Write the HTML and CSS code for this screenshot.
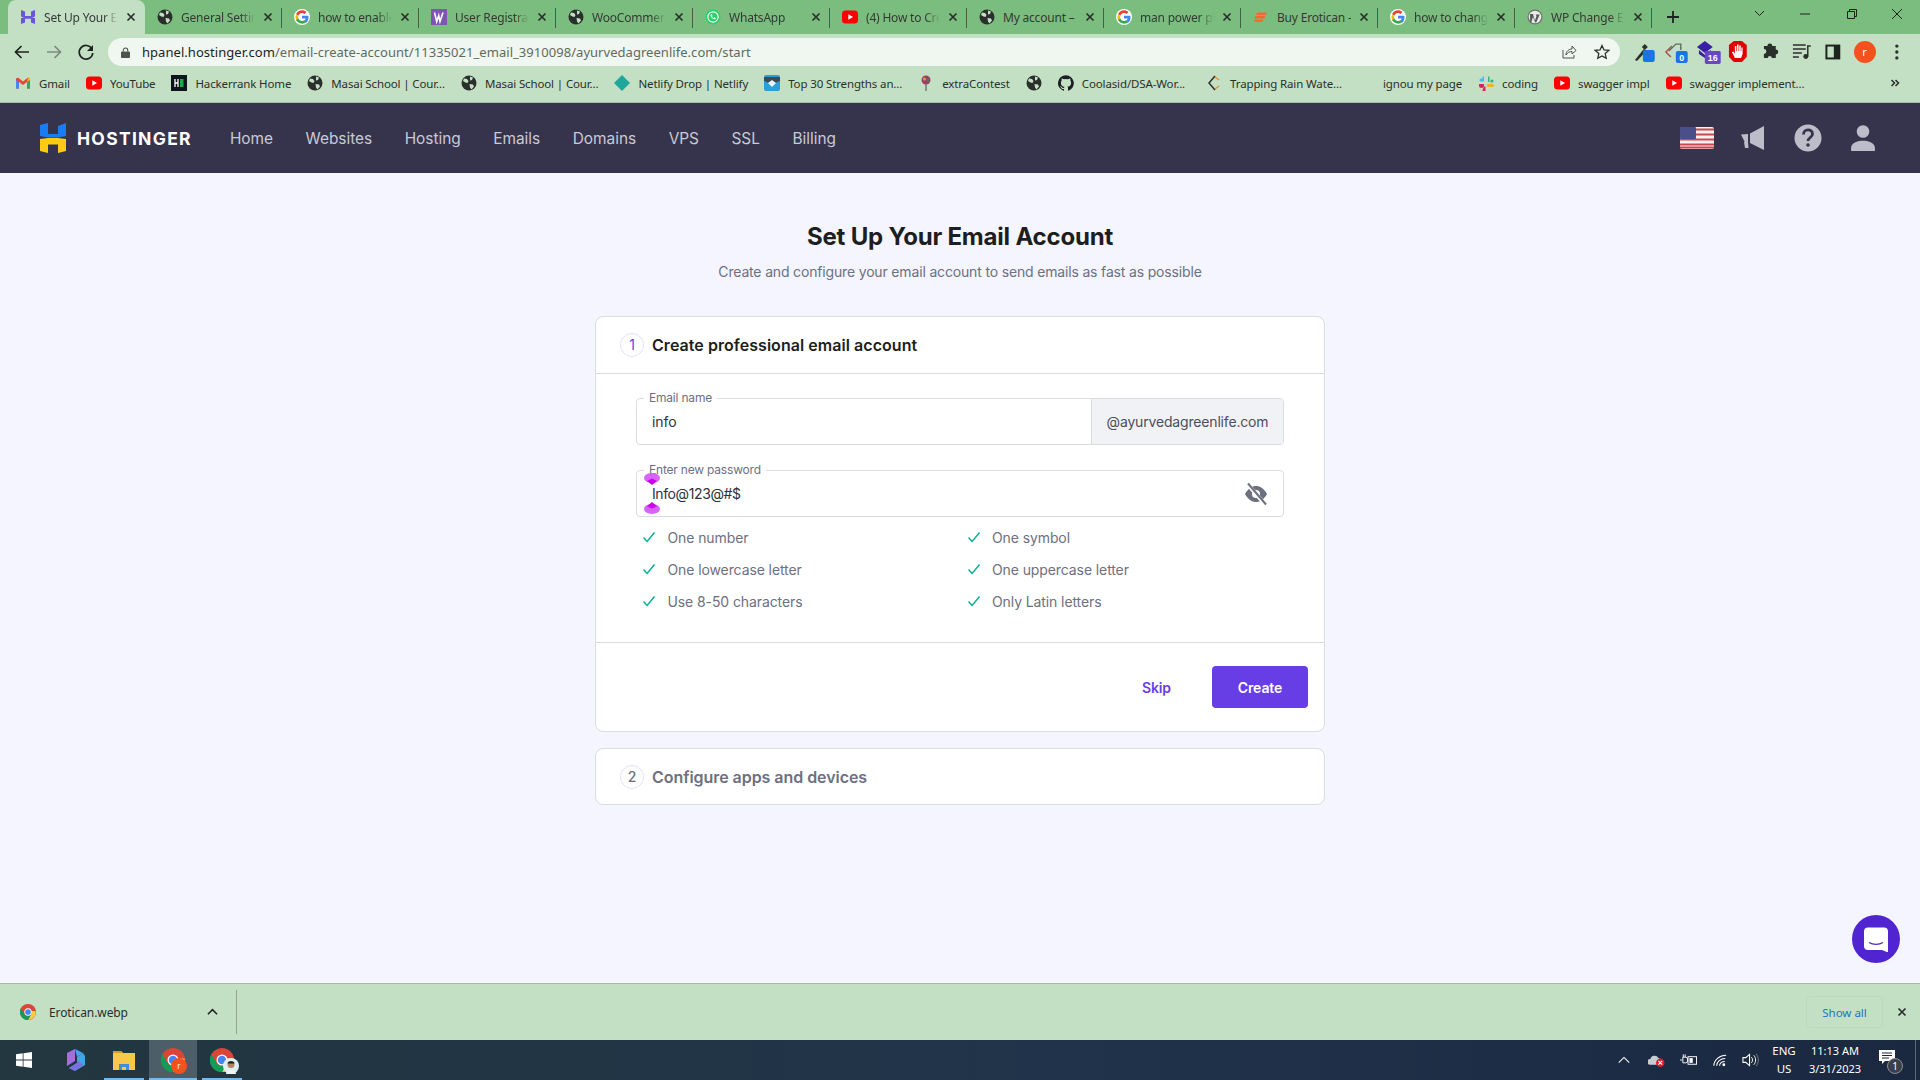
FILE: index.html
```html
<!DOCTYPE html>
<html lang="en">
<head>
<meta charset="utf-8">
<title>Set Up Your Email Account</title>
<link rel="stylesheet" href="styles.css">
</head>
<body>
<svg class="defs" width="0" height="0" aria-hidden="true">
  <symbol id="globe" viewBox="0 0 16 16"><circle cx="8" cy="8" r="7.5" fill="#2a2f2b"/><path d="M3 3.5l3 .5 1.5 2-1 2-2-.5L2 6zM9 1.500l3 1-1 2.500-2 .5zM8.500 9l3.500.5 1 2-2.500 3-1.500-2z" fill="#c4e0c4"/></symbol>
  <symbol id="g" viewBox="0 0 48 48"><circle cx="24" cy="24" r="24" fill="#fff"/><path fill="#EA4335" d="M24 12c3 0 5.600 1 7.700 3l5.700-5.700C33.900 6 29.400 4 24 4 16.200 4 9.500 8.500 6.200 15l6.700 5.200C14.500 15.400 18.900 12 24 12z"/><path fill="#4285F4" d="M43.500 24.500c0-1.600-.1-3.100-.4-4.500H24v8.500h11c-.5 2.700-2 5-4.300 6.600l6.600 5.100c3.900-3.600 6.200-9 6.200-15.700z"/><path fill="#FBBC05" d="M12.900 28.800a12 12 0 0 1 0-7.600L6.200 16a20 20 0 0 0 0 18z"/><path fill="#34A853" d="M24 44c5.400 0 9.900-1.800 13.300-4.800l-6.600-5.100c-1.800 1.200-4.100 2-6.700 2-5.100 0-9.500-3.400-11.100-8.100L6.200 33.200C9.500 39.500 16.200 44 24 44z"/></symbol>
  <symbol id="yt" viewBox="0 0 16 16"><rect y="1.500" width="16" height="13" rx="3.500" fill="#f00"/><path d="M6.300 5.300v5.400L11 8z" fill="#fff"/></symbol>
  <symbol id="chromelogo" viewBox="0 0 48 48"><circle cx="24" cy="24" r="24" fill="#DB4437"/><path d="M24 48l11-20-4-7h16a24 24 0 0 1-23 27z" fill="#FFCD40"/><path d="M24 48A24 24 0 0 1 3 12l12 21 9 0 11-5-11 20z" fill="#0F9D58"/><path d="M3 12h21v0l-9 21z" fill="#DB4437"/><circle cx="24" cy="24" r="11" fill="#fff"/><circle cx="24" cy="24" r="8.500" fill="#4285F4"/></symbol>
  <symbol id="check" viewBox="0 0 14 14"><path d="M1.500 7.500l3.600 4L12.500 2.500" fill="none" stroke="#00b090" stroke-width="1.400"/></symbol>
  <symbol id="x" viewBox="0 0 10 10"><path d="M1.500 1.500l7 7M8.500 1.500l-7 7" stroke="#2a2f2b" stroke-width="1.700" fill="none"/></symbol>
</svg>

<div class="tabstrip">
  <div class="tab tab-active">
    <svg class="fav" viewBox="0 0 16 16"><path d="M1 1l4 1.500v4.500h6V2.500L15 1v6.500l-3 1H4l-3-1zM1 15l4-1.500V9.800h6v3.700l4 1.500V9l-3-.5H4L1 9z" fill="#6c55d8"/></svg>
    <span class="tab-title">Set Up Your Email Account</span>
    <svg class="tab-x"><use href="#x"/></svg>
  </div>
  <div class="tab tab-sep"><svg class="fav"><use href="#globe"/></svg><span class="tab-title">General Settings</span><svg class="tab-x"><use href="#x"/></svg></div>
  <div class="tab tab-sep"><svg class="fav"><use href="#g"/></svg><span class="tab-title">how to enable</span><svg class="tab-x"><use href="#x"/></svg></div>
  <div class="tab tab-sep"><svg class="fav" viewBox="0 0 16 16"><rect width="16" height="16" fill="#7f54b3"/><path d="M2.500 3.500l2.200 9 2-6 1.300 6 3-9" transform="translate(1 0)" fill="none" stroke="#fff" stroke-width="1.600"/></svg><span class="tab-title">User Registration</span><svg class="tab-x"><use href="#x"/></svg></div>
  <div class="tab tab-sep"><svg class="fav"><use href="#globe"/></svg><span class="tab-title">WooCommerce</span><svg class="tab-x"><use href="#x"/></svg></div>
  <div class="tab tab-sep"><svg class="fav" viewBox="0 0 16 16"><circle cx="8" cy="8" r="7.500" fill="#25d366"/><circle cx="8" cy="8" r="5.200" fill="none" stroke="#fff" stroke-width="1.200"/><path d="M5.800 5.200c-.8 1.500.5 3.300 1.500 4.100 1 .9 2.500 1.500 3.300.7l.2-1-1.300-.7-.7.600c-.8-.3-1.500-1-1.900-1.900l.6-.7-.7-1.300z" fill="#fff"/></svg><span class="tab-title">WhatsApp</span><svg class="tab-x"><use href="#x"/></svg></div>
  <div class="tab tab-sep"><svg class="fav"><use href="#yt"/></svg><span class="tab-title">(4) How to Create</span><svg class="tab-x"><use href="#x"/></svg></div>
  <div class="tab tab-sep"><svg class="fav"><use href="#globe"/></svg><span class="tab-title tab-title-open">My account –</span><svg class="tab-x"><use href="#x"/></svg></div>
  <div class="tab tab-sep"><svg class="fav"><use href="#g"/></svg><span class="tab-title">man power plan</span><svg class="tab-x"><use href="#x"/></svg></div>
  <div class="tab tab-sep"><svg class="fav" viewBox="0 0 16 16"><path d="M4 3.500h10l-1 2.500H3zM2.500 7h10l-1.200 2.500H1.500zM2 10.500h8.500L9.500 13H1z" fill="#f26a2e"/></svg><span class="tab-title tab-title-open">Buy Erotican –</span><svg class="tab-x"><use href="#x"/></svg></div>
  <div class="tab tab-sep"><svg class="fav"><use href="#g"/></svg><span class="tab-title">how to change</span><svg class="tab-x"><use href="#x"/></svg></div>
  <div class="tab tab-sep"><svg class="fav" viewBox="0 0 16 16"><circle cx="8" cy="8" r="7.500" fill="#6b6f6c"/><circle cx="8" cy="8" r="6.300" fill="#e8ece8"/><path d="M3 5h4l-1 .5 2 6 1.500-4.500-.8-1.500h4l-3.500 8h-1L6 8l-1.800 5.500h-1z" fill="#555a56"/></svg><span class="tab-title">WP Change Email</span><svg class="tab-x"><use href="#x"/></svg></div>
  <svg class="newtab" viewBox="0 0 12 12"><path d="M6 0v12M0 6h12" stroke="#1d231e" stroke-width="1.800"/></svg>
  <div class="strip-space"></div>
  <div class="winctl">
    <svg class="win-btn" viewBox="0 0 46 28"><path d="M19 11l4.500 4.500L28 11" fill="none" stroke="#1d231e"/></svg>
    <svg class="win-btn" viewBox="0 0 46 28"><path d="M18 14h10" stroke="#1d231e"/></svg>
    <svg class="win-btn" viewBox="0 0 46 28"><path d="M19.500 11.500h7v7h-7zM21.500 11.500v-2h7v7h-2" fill="none" stroke="#1d231e"/></svg>
    <svg class="win-btn" viewBox="0 0 46 28"><path d="M18 9l10 10M28 9L18 19" stroke="#1d231e"/></svg>
  </div>
</div>

<div class="toolbar">
  <svg class="tb-btn" viewBox="0 0 32 28"><path d="M23 14H10M15.500 8l-6 6 6 6" fill="none" stroke="#1d231e" stroke-width="1.700"/></svg>
  <svg class="tb-btn" viewBox="0 0 32 28"><path d="M9 14h13M16.500 8l6 6-6 6" fill="none" stroke="#7c8a7d" stroke-width="1.700"/></svg>
  <svg class="tb-btn" viewBox="0 0 32 28"><path d="M22 11a6.800 6.800 0 1 0 .8 4" fill="none" stroke="#1d231e" stroke-width="1.700"/><path d="M23 7v6h-6z" fill="#1d231e"/></svg>
  <div class="omnibox">
    <svg class="lock" viewBox="0 0 10 12"><path d="M2.500 5V3.500a2.500 2.500 0 0 1 5 0V5" fill="none" stroke="#4c524d" stroke-width="1.200"/><rect y="5" width="10" height="7" rx="1" fill="#4c524d"/></svg>
    <span class="url"><span class="url-host">hpanel.hostinger.com</span>/email-create-account/11335021_email_3910098/ayurvedagreenlife.com/start</span>
    <svg class="omni-icon" viewBox="0 0 16 16"><path d="M2 6v8h11v-3" fill="none" stroke="#4c524d"/><path d="M5 11c0-4 3-6 6-6V2l4 4.500L11 10V7.500C8.500 7.500 6.500 8.500 5 11z" fill="none" stroke="#4c524d"/></svg>
    <svg class="omni-icon" viewBox="0 0 16 16"><path d="M8 1.500l2 4.400 4.800.5-3.600 3.200 1 4.700L8 11.900l-4.200 2.400 1-4.700L1.200 6.400 6 5.900z" fill="none" stroke="#2a2f2b" stroke-width="1.300"/></svg>
  </div>
  <div class="exts">
    <svg class="ext" viewBox="0 0 32 28"><path d="M8 22l9-11 2.500 2L10 23z" fill="#2a2f2b"/><path d="M15 9l3-3 3 3-3 3z" fill="#2a2f2b"/><rect x="16" y="12" width="12" height="12" rx="2" fill="#1a73e8"/></svg>
    <svg class="ext" viewBox="0 0 32 28"><path d="M13 8l-6 6 5 5" fill="none" stroke="#b0524a" stroke-width="1.500"/><path d="M10 13l7-7h5v6" fill="none" stroke="#5f6b60" stroke-width="1.400"/><rect x="17" y="13" width="12" height="12" rx="2" fill="#1a73e8"/><text class="ext-badge" x="23" y="23" text-anchor="middle">0</text></svg>
    <svg class="ext" viewBox="0 0 32 28"><path d="M15 3l8 6-8 6-8-6z" fill="#3b1ea8"/><path d="M9 12l6 5 6-5v4l-6 4-6-4z" fill="#3b1ea8"/><rect x="15" y="13" width="16" height="13" rx="1.500" fill="#6a45c8"/><text class="ext-badge" x="23" y="23.500" text-anchor="middle">16</text></svg>
    <svg class="ext" viewBox="0 0 32 28"><path d="M12 3h8l5 4v12l-5 5h-8l-5-5V7z" fill="#e00000"/><path d="M13 20l-3-6 1.500-.5 1.500 2V8h1.500v5h.7V6.500h1.500V13h.7V7.500h1.500V13h.6V9.500h1.300V16l-1.500 4z" fill="#fff"/></svg>
    <svg class="ext" viewBox="0 0 32 28"><path d="M10 11h3.500a2.500 2.500 0 0 1 5 0H22v3.500a2.500 2.500 0 0 1 0 5V23h-4a2 2 0 0 0-4 0h-4v-4a2.500 2.500 0 0 0 0-5z" fill="#2a2f2b" transform="translate(0 -3)"/></svg>
    <svg class="ext" viewBox="0 0 32 28"><path d="M8 8h13M8 12h13M8 16h9M8 20h6" transform="translate(0 -1)" stroke="#2a2f2b" stroke-width="1.500"/><circle cx="21" cy="18.500" r="2.500" fill="#2a2f2b"/><path d="M23 18.500V8h3" fill="none" stroke="#2a2f2b" stroke-width="1.500"/></svg>
    <svg class="ext" viewBox="0 0 32 28"><rect x="9.500" y="7.500" width="13" height="13" fill="none" stroke="#1d231e" stroke-width="2"/><rect x="17" y="7.500" width="6" height="13" fill="#1d231e"/></svg>
    <div class="avatar">r</div>
    <svg class="ext" viewBox="0 0 32 28"><circle cx="16" cy="8" r="1.700" fill="#2a2f2b"/><circle cx="16" cy="14" r="1.700" fill="#2a2f2b"/><circle cx="16" cy="20" r="1.700" fill="#2a2f2b"/></svg>
  </div>
</div>

<div class="bookmarks">
  <div class="bm"><svg class="fav" viewBox="0 0 16 16"><path d="M1 3.500v10h3V7l4 3 4-3v6.500h3v-10l-2-1L8 6.500 3 2.500z" fill="#ea4335"/><path d="M1 5v8.500h3V7z" fill="#4285f4"/><path d="M12 7v6.500h3V5z" fill="#34a853"/><path d="M13 2.500L12 7l3-2V3.500z" fill="#fbbc05"/></svg>Gmail</div>
  <div class="bm"><svg class="fav"><use href="#yt"/></svg>YouTube</div>
  <div class="bm"><svg class="fav" viewBox="0 0 16 16"><rect width="16" height="16" fill="#0e141e"/><path d="M4 4v8M7 4v8M4 8h3" stroke="#fff" stroke-width="1.300"/><rect x="9" y="4" width="3.500" height="8" fill="#1ba94c"/></svg>Hackerrank Home</div>
  <div class="bm"><svg class="fav"><use href="#globe"/></svg>Masai School | Cour...</div>
  <div class="bm"><svg class="fav"><use href="#globe"/></svg>Masai School | Cour...</div>
  <div class="bm"><svg class="fav" viewBox="0 0 16 16"><path d="M8 0l8 8-8 8-8-8z" fill="#20a79c"/></svg>Netlify Drop | Netlify</div>
  <div class="bm"><svg class="fav" viewBox="0 0 16 16"><rect width="16" height="16" rx="2" fill="#2a9fd8"/><path d="M0 2h16v4L8 9 0 6z" fill="#3c4a55"/><path d="M4 8l4-3 4 3-4 4z" fill="#e8f4fb"/></svg>Top 30 Strengths an...</div>
  <div class="bm"><svg class="fav" viewBox="0 0 16 16"><circle cx="8" cy="5" r="4.500" fill="#a33a6b"/><circle cx="6.500" cy="4" r="1.500" fill="#d9a520"/><circle cx="10" cy="5" r="1.500" fill="#2c8a4f"/><path d="M8 9v7" stroke="#777" stroke-width="1.500"/></svg>extraContest</div>
  <div class="bm"><svg class="fav"><use href="#globe"/></svg></div>
  <div class="bm"><svg class="fav" viewBox="0 0 16 16"><path fill="#1b1f23" d="M8 .2a8 8 0 0 0-2.500 15.600c.4.100.5-.2.500-.4v-1.400c-2.200.5-2.700-1-2.700-1-.4-.9-.9-1.200-.9-1.200-.7-.5.100-.5.100-.5.800.100 1.200.8 1.200.8.700 1.200 1.900.9 2.300.7.100-.5.300-.9.500-1.100-1.800-.2-3.600-.9-3.600-4 0-.9.300-1.600.8-2.100-.1-.2-.4-1 .1-2.100 0 0 .7-.2 2.200.8a7.500 7.500 0 0 1 4 0c1.500-1 2.200-.8 2.200-.8.400 1.100.2 1.900.1 2.100.5.600.8 1.300.8 2.100 0 3.100-1.900 3.700-3.700 3.900.3.300.6.700.6 1.500v2.200c0 .2.100.5.600.4A8 8 0 0 0 8 .2z"/></svg>Coolasid/DSA-Wor...</div>
  <div class="bm bm-trap"><svg class="fav" viewBox="0 0 16 16"><path d="M9 1L3 8l6 7" fill="none" stroke="#2a2f2b" stroke-width="1.500"/><path d="M9 2l4 3M9 14l4-3" stroke="#ef8f1f" stroke-width="1.500"/></svg>Trapping Rain Wate...</div>
  <div class="bm bm-nofav">ignou my page</div>
  <div class="bm"><svg class="fav" viewBox="0 0 16 16"><path d="M6 1v5H3a1.500 1.500 0 0 1 0-3h1.500V1z" fill="#36c5f0" transform="translate(0 .5)"/><path d="M10 1.500h1.500V7H10z" fill="#2eb67d"/><path d="M12.500 7.500V6A1.500 1.500 0 0 1 15.500 6a1.500 1.500 0 0 1-1.500 1.500z" fill="#2eb67d"/><path d="M9 9h5.500a1.500 1.500 0 0 1 0 3H9z" fill="#ecb22e"/><path d="M1 9h5v1.500a1.500 1.500 0 0 1-5 0z" fill="#e01e5a"/><path d="M6 11.500h1.500V15a1.500 1.500 0 0 1-3 0z" fill="#e01e5a"/></svg>coding</div>
  <div class="bm"><svg class="fav"><use href="#yt"/></svg>swagger impl</div>
  <div class="bm"><svg class="fav"><use href="#yt"/></svg>swagger implement...</div>
  <div class="strip-space"></div>
  <svg class="more" viewBox="0 0 10 10"><path d="M1.500 2l3 3-3 3M5.500 2l3 3-3 3" fill="none" stroke="#2a2f2b" stroke-width="1.500"/></svg>
</div>

<header class="topnav">
  <svg class="logo" viewBox="0 0 26 30">
    <path d="M0 2l8-2v11h10V3l8-3v13l-8 1.500H8L0 13z" fill="#1a7cf2"/>
    <path d="M0 16l8-1h10l8 1v12l-8 2v-8.500H8V30l-8-2z" fill="#ffcb14"/>
  </svg>
  <span class="brand">HOSTINGER</span>
  <nav class="navlinks">
    <a>Home</a><a>Websites</a><a>Hosting</a><a>Emails</a><a>Domains</a><a>VPS</a><a>SSL</a><a>Billing</a>
  </nav>
  <div class="nav-right">
    <svg class="flag" viewBox="0 0 34 22">
      <rect width="34" height="22" rx="2" fill="#f4f1f1"/>
      <path d="M0 2.500h34M0 7.500h34M0 12.500h34M0 17.500h34M0 20.500h34" stroke="#c9474f" stroke-width="2.100"/>
      <rect width="16" height="12" rx="1" fill="#4a4f8a"/>
    </svg>
    <svg class="nav-ic" viewBox="0 0 26 26"><path d="M1 9.500l7-.5v8l-3 .5zM10 8.500L24 1v24l-14-7z" fill="#bcbdc8"/><path d="M4 17h4l.5 6H5z" fill="#bcbdc8"/></svg>
    <svg class="nav-ic nav-ic-help" viewBox="0 0 28 28"><circle cx="14" cy="14" r="13.500" fill="#bcbdc8"/><path d="M9.500 10.500c0-6 9-6 9-.5 0 3.500-4.500 3.500-4.500 7" fill="none" stroke="#36344d" stroke-width="2.800"/><circle cx="14" cy="21" r="1.800" fill="#36344d"/></svg>
    <svg class="nav-ic" viewBox="0 0 24 24"><circle cx="12" cy="6" r="5.800" fill="#bcbdc8"/><path d="M1 24v-3c0-5 7-6.500 11-6.500S23 16 23 21v3z" fill="#bcbdc8"/></svg>
  </div>
</header>

<main class="page">
  <h1 class="page-title">Set Up Your Email Account</h1>
  <p class="page-sub">Create and configure your email account to send emails as fast as possible</p>

  <section class="card">
    <div class="card-head">
      <span class="step step-on">1</span>
      <h2 class="card-title">Create professional email account</h2>
    </div>
    <div class="card-body">
      <div class="field field-email">
        <label class="legend">Email name</label>
        <div class="field-value">info</div>
        <div class="suffix">@ayurvedagreenlife.com</div>
      </div>
      <div class="field field-pass">
        <label class="legend">Enter new password</label>
        <div class="field-value">Info@123@#$</div>
        <svg class="mark mark-top" viewBox="0 0 16 12"><ellipse cx="8" cy="5" rx="8" ry="5" fill="#d763f8"/><path d="M8 12L3 8h10z" fill="#c800ee"/><path d="M3 8h10L8 5.500z" fill="#c800ee"/></svg>
        <svg class="mark mark-bot" viewBox="0 0 16 12"><ellipse cx="8" cy="7" rx="8" ry="5" fill="#d763f8"/><path d="M8 0L3 4.500h10z" fill="#c800ee"/><path d="M3 4.500h10L8 6.500z" fill="#c800ee"/></svg>
        <svg class="eye" viewBox="0 0 24 24"><path d="M1 12c3-5.500 7-8 11-8s8 2.500 11 8c-3 5.500-7 8-11 8s-8-2.500-11-8z" fill="#6d7081"/><circle cx="12" cy="12" r="4" fill="#fff"/><path d="M3 1.500l18 21" stroke="#fff" stroke-width="4"/><path d="M4 1.500l18 21" stroke="#6d7081" stroke-width="2"/></svg>
      </div>
      <ul class="rules">
        <li><svg class="tick"><use href="#check"/></svg>One number</li>
        <li><svg class="tick"><use href="#check"/></svg>One symbol</li>
        <li><svg class="tick"><use href="#check"/></svg>One lowercase letter</li>
        <li><svg class="tick"><use href="#check"/></svg>One uppercase letter</li>
        <li><svg class="tick"><use href="#check"/></svg>Use 8-50 characters</li>
        <li><svg class="tick"><use href="#check"/></svg>Only Latin letters</li>
      </ul>
    </div>
    <div class="card-foot">
      <button class="btn-skip">Skip</button>
      <button class="btn-create">Create</button>
    </div>
  </section>

  <section class="card card-closed">
    <div class="card-head card-head-closed">
      <span class="step">2</span>
      <h2 class="card-title card-title-muted">Configure apps and devices</h2>
    </div>
  </section>

  <button class="chat" aria-label="Chat">
    <svg viewBox="0 0 24 24" width="24" height="25"><path d="M4 0h16a4 4 0 0 1 4 4v21l-6-2.500H4a4 4 0 0 1-4-4V4a4 4 0 0 1 4-4z" fill="#fff"/><path d="M5 15c4 2.500 10 2.500 14 0" fill="none" stroke="#5025d1" stroke-width="1.400"/></svg>
  </button>
</main>

<div class="downloads">
  <div class="dl-item">
    <svg class="fav"><use href="#chromelogo"/></svg>
    <span class="dl-name">Erotican.webp</span>
    <svg class="dl-chev" viewBox="0 0 12 8"><path d="M1 6.500l5-5 5 5" fill="none" stroke="#1d231e" stroke-width="1.700"/></svg>
  </div>
  <div class="strip-space"></div>
  <div class="showall">Show all</div>
  <svg class="dl-x"><use href="#x"/></svg>
</div>

<footer class="taskbar">
  <svg class="win" viewBox="0 0 16 16"><path d="M0 2.300l6.700-1v6.300H0zM7.500 1.200L16 0v7.600H7.500zM0 8.400h6.700v6.300l-6.700-1zM7.500 8.400H16V16l-8.500-1.200z" fill="#fff"/></svg>
  <div class="task task-plain"><svg class="task-ic" viewBox="0 0 24 24"><path d="M12 1l8 4-6 4z" fill="#46a5e8"/><path d="M4 5l8-4v12l-8 5a4 4 0 0 1 0-3z" fill="#a46fdc"/><path d="M20 5l2 3v9l-10 6-6-3 8-5v-6z" fill="#3fa8df"/><path d="M6 20l8-5 0-3 6 5-8 6z" fill="#7c6fe0"/></svg></div>
  <div class="task task-on task-files"><svg class="task-ic" viewBox="0 0 24 24"><path d="M1 3h8l2 2h12v17H1z" fill="#f6c94c"/><path d="M1 3h8l2 2H1z" fill="#d79c26"/><path d="M7 16h10v6h-3v-3h-4v3H7z" fill="#3f8fd8"/></svg></div>
  <div class="task task-on task-active"><svg class="task-ic"><use href="#chromelogo"/></svg><span class="task-badge">r</span></div>
  <div class="task task-on"><svg class="task-ic"><use href="#chromelogo"/></svg><svg class="task-photo" viewBox="0 0 16 16"><circle cx="8" cy="8" r="8" fill="#dff0f5"/><circle cx="8" cy="6.500" r="3.500" fill="#b78263"/><path d="M4.500 5.500c0-3 7-3 7 0z" fill="#1c1c1c"/><path d="M3 16c0-5 10-5 10 0z" fill="#f2f2f2"/></svg></div>
  <div class="strip-space"></div>
  <svg class="tray tray-caret" viewBox="0 0 16 16"><path d="M2 11l6-6 6 6" fill="none" stroke="#fff" stroke-width="1.200"/></svg>
  <svg class="tray" viewBox="0 0 18 16"><path d="M2 13a3 3 0 0 1 .5-6 4.500 4.500 0 0 1 8.500-1 4 4 0 0 1 2 7z" fill="#c8ccd2"/><circle cx="13" cy="11" r="4.500" fill="#d9202f"/><path d="M11 9l4 4M15 9l-4 4" stroke="#fff" stroke-width="1.200"/></svg>
  <svg class="tray" viewBox="0 0 18 16"><path d="M0 8h2M3 5v6h3a2 2 0 0 0 2-2V7a2 2 0 0 0-2-2zM3.500 5V2M5.500 5V2" stroke="#fff" fill="none"/><rect x="8.500" y="4.500" width="9" height="8" fill="none" stroke="#fff"/><rect x="10" y="6" width="3.500" height="5" fill="#fff"/></svg>
  <svg class="tray tray-wifi" viewBox="0 0 18 16"><path d="M2 14C2 8 8 3 15 3M5 14c0-4 4-7.500 9-7.500M8 14c0-2.500 2.500-4.500 5.500-4.500" fill="none" stroke="#fff" stroke-width="1.100"/><circle cx="12.500" cy="13" r="1.500" fill="#fff"/></svg>
  <svg class="tray tray-vol" viewBox="0 0 18 16"><path d="M1 5.500h3L8 2v12l-4-3.500H1z" fill="none" stroke="#fff" stroke-width="1.100"/><path d="M10 5c1.500 1.500 1.500 4.500 0 6M12.500 3c2.500 2.500 2.500 7.500 0 10" fill="none" stroke="#fff"/><path d="M15 1.500c3 3.500 3 9.500 0 13" fill="none" stroke="#777f8a"/></svg>
  <div class="lang"><span>ENG</span><span>US</span></div>
  <div class="clock"><span>11:13 AM</span><span>3/31/2023</span></div>
  <div class="notif">
    <svg class="notif-ic" viewBox="0 0 16 15"><path d="M0 0h16v11H6l-3 3v-3H0z" fill="#fff"/><path d="M3 3h10M3 5.500h10M3 8h7" stroke="#1a2840"/></svg>
    <span class="notif-count">1</span>
  </div>
  <div class="desk-edge"></div>
</footer>
</body>
</html>
```

FILE: styles.css
```css
* { box-sizing: border-box; }
html, body { margin: 0; padding: 0; }
body {
  width: 1920px;
  height: 1080px;
  overflow: hidden;
  display: flex;
  flex-direction: column;
  font-family: "Inter", "Liberation Sans", sans-serif;
  background: #f4f5ff;
}
.defs { position: absolute; }
.strip-space { flex: 1; }
.fav { width: 16px; height: 16px; flex: none; }

/* Browser chrome */
.tabstrip {
  height: 34px;
  flex: none;
  display: flex;
  padding-left: 8px;
  background: #7bbd7f;
  font: 12px "Noto Sans", sans-serif;
  color: #333a34;
}
.tab {
  width: 137px;
  height: 34px;
  flex: none;
  display: flex;
  align-items: center;
  padding-left: 12px;
  padding-right: 9px;
  gap: 8px;
  position: relative;
}
.tab-active {
  background: #c4e0c4;
  border-radius: 8px 8px 0 0;
}
.tab-sep::after {
  content: "";
  position: absolute;
  right: 0;
  top: 8px;
  width: 1px;
  height: 20px;
  background: #465f48;
}
.tab-title {
  flex: 1;
  min-width: 0;
  white-space: nowrap;
  overflow: hidden;
  letter-spacing: -.2px;
  -webkit-mask-image: linear-gradient(90deg, #000 80%, transparent 100%);
  mask-image: linear-gradient(90deg, #000 80%, transparent 100%);
}
.tab-title-open { -webkit-mask-image: none; mask-image: none; }
.tab-x { width: 10px; height: 10px; flex: none; }
.newtab { width: 12px; height: 12px; margin: 11px 0 0 15px; flex: none; }
.winctl { display: flex; align-items: flex-start; }
.win-btn { width: 46px; height: 28px; flex: none; display: block; }

.toolbar {
  height: 32px;
  flex: none;
  display: flex;
  align-items: center;
  padding: 4px 0 0 6px;
  background: #c4e0c4;
}
.tb-btn { width: 32px; height: 28px; flex: none; }
.omnibox {
  flex: 1;
  height: 28px;
  margin-left: 6px;
  padding: 0 10px 0 13px;
  border-radius: 14px;
  background: #f0f7f0;
  display: flex;
  align-items: center;
  font: 13px "Noto Sans", sans-serif;
  color: #5f6b60;
}
.lock { width: 9px; height: 11px; flex: none; margin-right: 12px; }
.url { flex: 1; white-space: nowrap; letter-spacing: .04px; }
.url-host { color: #1d231e; }
.omni-icon { width: 16px; height: 16px; flex: none; margin-left: 17px; }
.exts {
  width: 300px;
  flex: none;
  display: flex;
  align-items: center;
  padding-left: 7px;
}
.ext { width: 31.7px; height: 28px; flex: none; }
.ext-badge { font: 700 9px "Liberation Sans", sans-serif; fill: #fff; }
.avatar {
  width: 22px;
  height: 22px;
  flex: none;
  margin: 0 5.800px 0 4.800px;
  border-radius: 50%;
  background: #f4511e;
  color: #fff;
  font: 11px/22px "Noto Sans", sans-serif;
  text-align: center;
}

.bookmarks {
  height: 37px;
  flex: none;
  display: flex;
  align-items: center;
  gap: 16px;
  padding: 0 20px 2px 15px;
  background: #c4e0c4;
  border-bottom: 1px solid #a5bca5;
  font: 11.500px "Noto Sans", sans-serif;
  color: #2a2f2b;
}
.bm { display: flex; align-items: center; gap: 8px; white-space: nowrap; letter-spacing: -.13px; }
.bm-trap { margin-left: 5px; }
.bm-nofav { margin-left: 25px; }
.more { width: 10px; height: 10px; flex: none; }

/* Hostinger nav */
.topnav {
  height: 70px;
  flex: none;
  display: flex;
  align-items: center;
  padding: 0 44px 0 40px;
  background: #36344d;
}
.logo { width: 26px; height: 30px; flex: none; }
.brand {
  margin-left: 11px;
  font: 700 17.500px "Inter", sans-serif;
  letter-spacing: 1.300px;
  color: #fff;
}
.navlinks { display: flex; gap: 32.500px; margin-left: 38px; flex: 1; }
.navlinks a { font-size: 15.400px; color: #c9cad6; }
.nav-right { display: flex; align-items: center; gap: 28px; }
.flag { width: 34px; height: 22px; flex: none; margin-right: -2px; }
.nav-ic { width: 26px; height: 26px; flex: none; }
.nav-ic-help { width: 28px; height: 28px; }

/* Page */
.page {
  flex: 1;
  min-height: 0;
  position: relative;
  display: flex;
  flex-direction: column;
  align-items: center;
  padding-top: 50px;
}
.page-title {
  margin: 0;
  font-size: 24px;
  line-height: 28px;
  font-weight: 700;
  color: #1d1e20;
  letter-spacing: -.2px;
}
.page-sub {
  margin: 11px 0 0;
  font-size: 14px;
  line-height: 20px;
  color: #6d7081;
  letter-spacing: -.165px;
}
.card {
  width: 730px;
  margin-top: 34px;
  background: #fff;
  border: 1px solid #dadce0;
  border-radius: 8px;
}
.card-closed { margin-top: 16px; }
.card-head {
  height: 57px;
  display: flex;
  align-items: center;
  padding-left: 24px;
  gap: 8px;
  border-bottom: 1px solid #dadce0;
}
.card-head-closed { border-bottom: 0; height: 55px; }
.step {
  width: 24px;
  height: 24px;
  flex: none;
  border: 1px solid #e4e0f8;
  border-radius: 50%;
  font-size: 14px;
  line-height: 22px;
  text-align: center;
  color: #6d7081;
  font-weight: 500;
}
.step-on { color: #673de6; font-weight: 400; }
.card-title {
  margin: 0;
  font-size: 16px;
  font-weight: 600;
  color: #1d1e20;
  letter-spacing: .05px;
}
.card-title-muted { color: #6d7081; letter-spacing: -.05px; }
.card-body { padding: 24px 40px 25px; border-bottom: 1px solid #dadce0; }
.field {
  height: 47px;
  position: relative;
  display: flex;
  border: 1px solid #dadce0;
  border-radius: 4px;
}
.field-pass { margin-top: 25px; }
.legend {
  position: absolute;
  left: 7px;
  top: -9px;
  padding: 0 5px;
  background: #fff;
  font-size: 12px;
  line-height: 16px;
  color: #6d7081;
  letter-spacing: -.2px;
}
.field-value {
  flex: 1;
  padding: 13px 0 0 15px;
  font-size: 14px;
  line-height: 20px;
  color: #2f3138;
  letter-spacing: -.1px;
}
.field-pass .field-value { letter-spacing: -.4px; }
.suffix {
  width: 192px;
  flex: none;
  display: flex;
  align-items: center;
  justify-content: center;
  background: #f1f2f6;
  border-left: 1px solid #dadce0;
  border-radius: 0 3px 3px 0;
  font-size: 14px;
  color: #4c4e5a;
  letter-spacing: -.17px;
}
.mark { position: absolute; left: 7px; width: 16px; height: 12px; }
.mark-top { top: 2px; }
.mark-bot { top: 31px; }
.eye {
  width: 24px;
  height: 24px;
  flex: none;
  position: absolute;
  right: 15px;
  top: 11px;
}
.rules {
  list-style: none;
  margin: 4px 0 0;
  padding: 0 0 0 6px;
  display: grid;
  grid-template-columns: 324.500px 1fr;
  grid-auto-rows: 32px;
}
.rules li {
  display: flex;
  align-items: center;
  gap: 11.500px;
  font-size: 14px;
  color: #6d7081;
  letter-spacing: -.1px;
}
.tick { width: 14px; height: 14px; flex: none; }
.card-foot {
  display: flex;
  justify-content: flex-end;
  align-items: center;
  gap: 41px;
  padding: 23px 16px 23px;
}
.btn-skip, .btn-create {
  border: 0;
  background: none;
  padding: 0;
  font: 600 14px "Inter", sans-serif;
  letter-spacing: -.1px;
}
.btn-skip { color: #673de6; }
.btn-create {
  width: 96px;
  height: 42px;
  border-radius: 4px;
  background: #673de6;
  color: #fff;
}
.chat {
  position: absolute;
  right: 20px;
  bottom: 20px;
  width: 48px;
  height: 48px;
  border: 0;
  padding: 0;
  border-radius: 50%;
  background: #5025d1;
  display: flex;
  align-items: center;
  justify-content: center;
}

/* Download shelf */
.downloads {
  height: 57px;
  flex: none;
  display: flex;
  align-items: center;
  background: #c4e0c4;
  border-top: 1px solid #aab5aa;
  font: 12px "Noto Sans", sans-serif;
  color: #2a2f2b;
  padding-left: 20px;
  padding-right: 13px;
}
.dl-item {
  width: 217px;
  height: 44px;
  flex: none;
  display: flex;
  align-items: center;
  border-right: 1px solid #93a493;
  padding-right: 18px;
}
.dl-name { flex: 1; margin-left: 13px; letter-spacing: -.1px; }
.dl-chev { width: 11px; height: 8px; flex: none; }
.showall {
  width: 77px;
  height: 32px;
  flex: none;
  margin-right: 14px;
  border: 1px solid #bcd8c2;
  border-radius: 4px;
  display: flex;
  align-items: center;
  justify-content: center;
  color: #1a73c8;
  font-size: 11.500px;
}
.dl-x { width: 10px; height: 10px; flex: none; }

/* Windows taskbar */
.taskbar {
  height: 40px;
  flex: none;
  display: flex;
  align-items: center;
  background: linear-gradient(90deg, #22373f 0%, #20334a 55%, #1a2840 100%);
  color: #fff;
  font: 12px "Noto Sans", sans-serif;
  padding-left: 16px;
}
.win { width: 16px; height: 16px; flex: none; margin-right: 32px; }
.task {
  width: 48px;
  height: 40px;
  flex: none;
  display: flex;
  align-items: center;
  justify-content: center;
  position: relative;
}
.task-plain { width: 22px; margin-right: 14px; }
.task-ic { width: 24px; height: 24px; flex: none; }
.task-on::after {
  content: "";
  position: absolute;
  left: 4px;
  right: 4px;
  bottom: 0;
  height: 2px;
  background: #76b9ed;
}
.task-files { margin-right: 1px; }
.task-active { background: #4c5f69; margin-right: 1px; }
.task-active::after { left: 0; right: 0; }
.task-badge {
  position: absolute;
  left: 22px;
  top: 18px;
  width: 16px;
  height: 16px;
  border-radius: 50%;
  background: #f4511e;
  font-size: 8px;
  line-height: 16px;
  text-align: center;
}
.task-photo { position: absolute; left: 25px; top: 18px; width: 16px; height: 16px; }
.tray { width: 17px; height: 16px; flex: none; margin-right: 15px; }
.tray-caret { margin-right: 17px; width: 14px; }
.tray-wifi { margin-right: 13px; }
.tray-vol { margin-right: 11px; }
.lang, .clock {
  display: flex;
  flex-direction: column;
  align-items: center;
  line-height: 18px;
  font-size: 11.500px;
  flex: none;
}
.lang { width: 28px; }
.clock { width: 56px; margin-left: 9px; font-size: 11px; }
.notif { width: 24px; height: 24px; flex: none; margin-left: 16px; margin-right: 12px; position: relative; }
.notif-ic { position: absolute; left: 0; top: 2px; width: 16px; height: 15px; }
.notif-count {
  position: absolute;
  left: 8px;
  top: 10px;
  width: 16px;
  height: 16px;
  border-radius: 50%;
  background: #3a3f48;
  border: 1px solid #8a8f98;
  font-size: 10px;
  line-height: 14px;
  text-align: center;
}
.desk-edge { width: 1px; height: 40px; flex: none; background: #5b6676; margin-right: 4px; }
```
